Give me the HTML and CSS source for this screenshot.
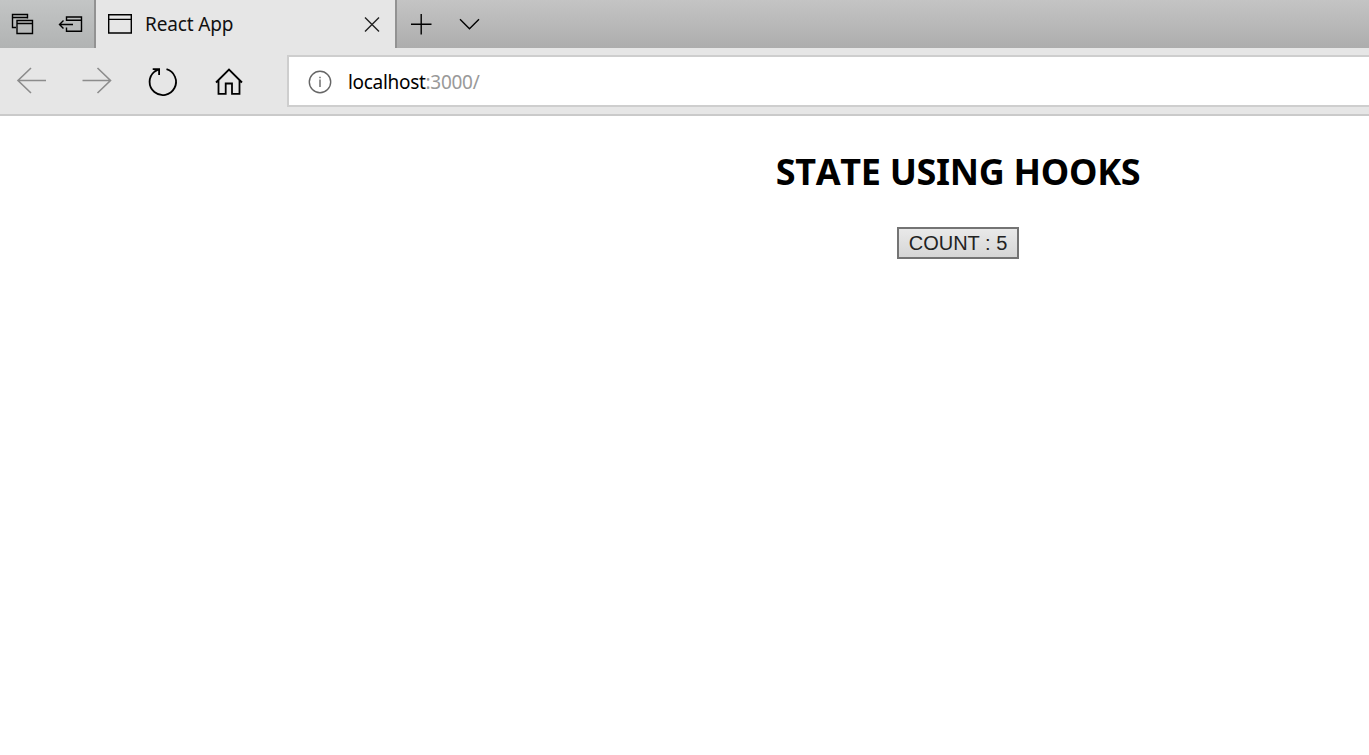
FILE: index.html
```html
<!DOCTYPE html>
<html lang="en">
<head>
<meta charset="utf-8">
<title>React App</title>
<link rel="stylesheet" href="styles.css">
</head>
<body>
<header class="tabs">
  <div class="tab-tools">
    <svg class="icon" width="94" height="48" viewBox="0 0 94 48">
      <path d="M16 27.5H12.5V14.5H27.5V18.5M12.5 17.5H27.5M17 20.5H32.5V33.5H17ZM17 23.5H32.5"/>
      <path d="M66.5 21V17H81.5V31.2H66.5V27.5M66.5 20.3H81.5M73 24.5H59.5M63.5 20.5L59.5 24.5L63.5 28.5"/>
    </svg>
  </div>
  <div class="tab">
    <svg class="icon" width="26" height="22" viewBox="0 0 26 22"><path d="M1.7 1.7H24.3V20H1.7ZM1.7 6.4H24.3"/></svg>
    <span class="tab-title">React App</span>
    <svg class="icon close" width="16" height="16" viewBox="0 0 16 16"><path d="M1 1.5L15 15.5M15 1.5L1 15.5"/></svg>
  </div>
  <svg class="icon" width="100" height="48" viewBox="0 0 100 48"><path d="M24.2 14V34.5M14 24.2H34.5M63 19.2L72.5 28.7L82 19.2"/></svg>
</header>
<nav class="toolbar">
  <svg class="icon" width="287" height="66" viewBox="0 0 287 66">
    <path class="muted" d="M18 32.5H46M31 20L18 32.5L31 45"/>
    <path class="muted" d="M82.5 32.5H110.5M97.5 20L110.5 32.5L97.5 45"/>
    <path class="bold" d="M166.5 21.2A13.2 13.2 0 1 1 154.5 23.6L158.8 21.2M152.7 21.2H159.1V27"/>
    <path class="bold" d="M216 34.5L229 21.5L242 34.5M218.5 32V45.8H225.7V35.5H232V45.8H239.5V32"/>
  </svg>
  <div class="address">
    <svg class="info" width="24" height="24" viewBox="0 0 24 24"><circle cx="12" cy="12" r="10.7"/><path d="M12 9.5V17M12 6.7V8.2"/></svg>
    <span class="url">localhost<span class="port">:3000/</span></span>
  </div>
</nav>
<main class="page">
  <h2 class="heading">STATE USING HOOKS</h2>
  <button class="count">COUNT : 5</button>
</main>
</body>
</html>
```
FILE: styles.css
```css
body {
  margin: 0;
  height: 755px;
  overflow: hidden;
  background: #fff;
  font-family: "Noto Sans", "Open Sans", sans-serif;
}
.tabs {
  display: flex;
  height: 48px;
  background: linear-gradient(#c4c4c4, #adadad);
}
.tab-tools {
  width: 94px;
  height: 48px;
  background: linear-gradient(#c3c5c5, #b1b3b3);
}
.icon {
  display: block;
  flex: none;
  fill: none;
  stroke: #000;
  stroke-width: 1.4;
}
.tab {
  display: flex;
  align-items: center;
  box-sizing: border-box;
  width: 303px;
  padding: 0 15px 0 11px;
  border: solid #929292;
  border-width: 0 2px;
  background: #e6e6e6;
}
.tab-title {
  margin-left: 12px;
  padding-top: 1px;
  font-size: 19px;
  line-height: 47px;
  letter-spacing: -0.15px;
  color: #111;
  white-space: nowrap;
}
.close {
  margin-left: auto;
  stroke: #222;
}
.toolbar {
  display: flex;
  height: 66px;
  border-bottom: 2px solid #cacaca;
  background: #e6e6e6;
}
.muted {
  stroke: #8c8c8c;
  stroke-width: 1.6;
}
.bold {
  stroke-width: 1.8;
}
.address {
  display: flex;
  align-items: center;
  flex: 1;
  box-sizing: border-box;
  height: 52px;
  margin-top: 7px;
  padding: 2px 0 0 19px;
  border: 2px solid #cecece;
  border-right: 0;
  background: #fff;
}
.info {
  fill: none;
  stroke: #666;
  stroke-width: 1.4;
}
.url {
  margin-left: 16px;
  font-size: 19px;
  letter-spacing: -0.3px;
  line-height: 46px;
  color: #000;
}
.port {
  color: #999;
}
.page {
  display: flex;
  flex-direction: column;
  align-items: center;
  padding-left: 547px;
}
.heading {
  margin: 31px 0 30px;
  font-size: 36px;
  line-height: 50px;
  font-weight: 700;
  font-kerning: none;
  letter-spacing: -0.3px;
  color: #000;
}
.count {
  width: 122px;
  height: 32px;
  padding: 0;
  border: 2px solid #747474;
  border-radius: 0;
  background: linear-gradient(#e9e9e9, #d6d6d6);
  font: 20px/28px "Liberation Sans", Arial, sans-serif;
  color: #222;
  white-space: nowrap;
}
```
